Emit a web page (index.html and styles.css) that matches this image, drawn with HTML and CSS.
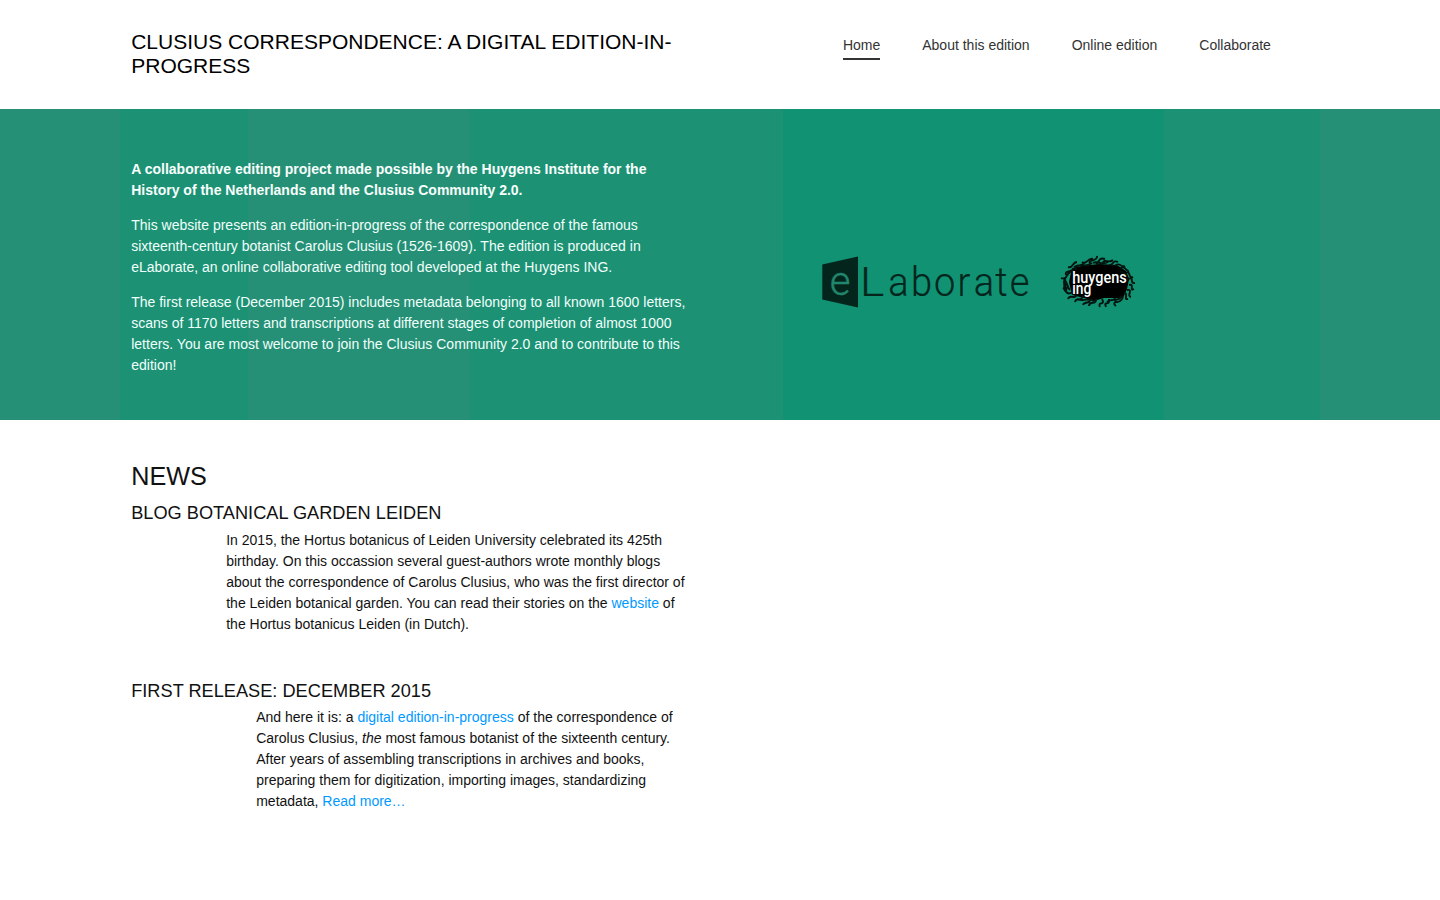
FILE: index.html
```html
<!DOCTYPE html>
<html lang="en">
<head>
<meta charset="utf-8">
<title>Clusius Correspondence: a digital edition-in-progress</title>
<link rel="stylesheet" href="styles.css">
</head>
<body>
<header class="site-header">
  <div class="container">
    <h1 class="site-title">Clusius Correspondence: a digital edition-in-progress</h1>
    <nav class="site-nav">
      <a class="active" href="#">Home</a>
      <a href="#">About this edition</a>
      <a href="#">Online edition</a>
      <a href="#">Collaborate</a>
    </nav>
  </div>
</header>
<section class="banner">
  <div class="container">
    <div class="banner-text">
      <p><strong>A collaborative editing project made possible by the Huygens Institute for the History of the Netherlands and the Clusius Community 2.0.</strong></p>
      <p>This website presents an edition-in-progress of the correspondence of the famous sixteenth-century botanist Carolus Clusius (1526-1609). The edition is produced in eLaborate, an online collaborative editing tool developed at the Huygens ING.</p>
      <p>The first release (December 2015) includes metadata belonging to all known 1600 letters, scans of 1170 letters and transcriptions at different stages of completion of almost 1000 letters. You are most welcome to join the Clusius Community 2.0 and to contribute to this edition!</p>
    </div>
    <div class="logos">
      <svg class="logo-elaborate" viewBox="0 0 210 54" role="img" aria-label="eLaborate">
        <path class="sign" d="M.3 9.5 36 1.5V52.5L.3 44.5z"/>
        <text class="sign-letter" x="7.8" y="39.5">e</text>
        <text class="wordmark" transform="translate(38 41.2) scale(1.15 1)">L</text>
        <text class="wordmark" transform="translate(0 41.2) scale(.95 1)" x="69.7 93.6 118 142.7 159.8 182.5 197.6">aborate</text>
      </svg>
      <svg class="logo-huygens" viewBox="0 0 76 54" role="img" aria-label="huygens ing">
        <path class="blob" d="M12 13 22 11 39 9 57 10 66 16 69 24 67 34 63 43 44 43 34 46 24 43 12 40 9 27z"/>
        <path class="scribble" d="M8 38c-8-4 0-7-3-10M3 34c4-2-2-7 3-11M1 23c7 3 5-7 12-7M6 20c-2-5 6-2 8-7M8 12c5 2 4-5 9-5M16 15c-2-6 7-3 9-8M22 7c4 4 6-5 11-3M30 9c-3-5 8-2 7-8M36 9c4-2 2-7 9-5M43 8c1-5 6 1 10-3M49 10c5 1 3-6 9-3M55 11c4-5 6 2 10 0M60 14c5-5 6 3 9 2M66 18c5-3 2 6 7 4M68 24c7-3 1 5 7 4M69 30c6-2 0 7 5 4M67 35c7-1-1 6 4 7M64 38c5 0-1 7 4 6M60 42c6-1 0 6-4 5M54 43c5 5-3 4 2 8M49 44c1 8-6 1-3 8M42 44c4 7-5 2-2 8M36 43c1 8-7 2-7 8M29 44c3 5-5 2-6 6M23 41c-2 7-7 0-8 6M17 39c-2 7-7-1-9 5M13 37c-7 4-8-1-6-5M14 12c8-5 10 2 18-4M48 7c-7 4-10-2-15 1M60 16c6 2 8 6 8 10M17 44c8 3 12-2 17 2M47 47c5-5 10 1 14-5M4 25c3 0 3 8 6 10"/>
        <text class="brand" x="12.3" y="28.3" textLength="54.5" lengthAdjust="spacingAndGlyphs">huygens</text>
        <text class="brand" x="12.3" y="39" textLength="19" lengthAdjust="spacingAndGlyphs">ing</text>
      </svg>
    </div>
  </div>
</section>
<main class="container news">
  <h2>News</h2>
  <article class="blog">
    <h3>Blog Botanical Garden Leiden</h3>
    <p>In 2015, the Hortus botanicus of Leiden University celebrated its 425th birthday. On this occassion several guest-authors wrote monthly blogs about the correspondence of Carolus Clusius, who was the first director of the Leiden botanical garden. You can read their stories on the <a href="#">website</a> of the Hortus botanicus Leiden (in Dutch).</p>
  </article>
  <article class="release">
    <h3>First release: December 2015</h3>
    <p>And here it is: a <a href="#">digital edition-in-progress</a> of the correspondence of Carolus Clusius, <em>the</em> most famous botanist of the sixteenth century. After years of assembling transcriptions in archives and books, preparing them for digitization, importing images, standardizing metadata, <a href="#">Read more…</a></p>
  </article>
</main>
</body>
</html>
```
FILE: styles.css
```css
* { box-sizing: border-box; }
body {
  margin: 0;
  background: #fff;
  color: #111;
  font: 14px/21px "Liberation Sans", Arial, sans-serif;
}
h1, h2, h3, p { margin: 0; font-weight: 400; }
h1, h2, h3 { text-transform: uppercase; }
a { color: #0099ff; text-decoration: none; }
.container { width: 1177.6px; margin: 0 auto; }
.site-header { height: 109px; padding-top: 30px; }
.site-header .container { display: flex; }
.site-title { width: 560px; color: #000; font-size: 21px; line-height: 24px; }
.site-nav { display: flex; gap: 42px; margin-left: 151.7px; padding-top: 5px; }
.site-nav a { height: 25px; color: #333; white-space: nowrap; }
.site-nav .active { border-bottom: 2px solid #333; }
.banner {
  height: 311px;
  padding-top: 50px;
  color: #f0fffb;
  background: linear-gradient(to right, #269076 120px, #1d9174 120px 248px, #269076 248px 470px, #1d9174 470px 783px, #109273 783px 1164px, #1d9174 1164px 1320px, #269076 1320px);
}
.banner .container { display: flex; }
.banner-text { width: 560px; }
.banner-text p { margin-bottom: 14px; }
.banner-text strong { font-weight: 700; color: #f8fffd; }
.logos { display: flex; gap: 28px; margin: 96px 0 0 130.8px; }
.logo-elaborate { width: 210px; height: 54px; }
.logo-huygens { width: 76px; height: 54px; }
.sign { fill: #03251c; }
.sign-letter { font: 300 40px Roboto, sans-serif; fill: #20866c; stroke: #20866c; stroke-width: .4; }
.wordmark { font: 300 40px Roboto, sans-serif; fill: #03251c; stroke: #03251c; stroke-width: .2; }
.blob { fill: #000; }
.scribble { fill: none; stroke: #03130e; stroke-width: 1.9; }
.brand { font: 500 16px Roboto, sans-serif; fill: #fff; }
.container.news { padding-top: 40px; }
.news h2 { font-size: 25.2px; line-height: 32px; margin-bottom: 9px; }
.news h3 { font-size: 18.2px; line-height: 24px; margin-bottom: 4px; }
.news article { width: 560px; }
.blog { height: 178px; }
.news .blog h3 { margin-bottom: 5px; }
.blog p { padding-left: 95px; }
.release p { padding-left: 125px; }
```
